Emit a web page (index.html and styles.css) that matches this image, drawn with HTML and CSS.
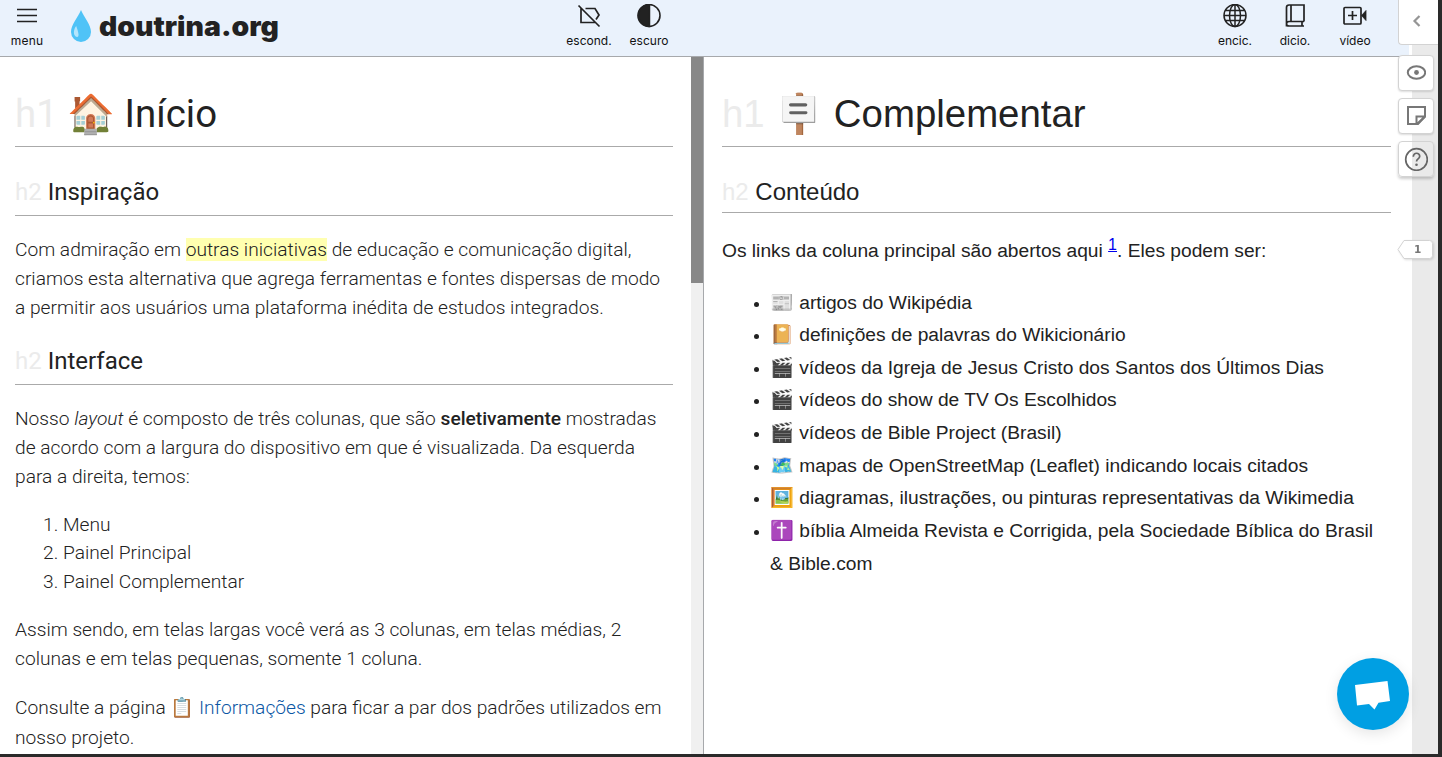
FILE: index.html
```html
<!DOCTYPE html>
<html lang="pt-BR">
<head>
<meta charset="utf-8">
<title>doutrina.org</title>
<link rel="stylesheet" href="styles.css">
</head>
<body>
<div class="window">
  <div class="site">
    <header class="topbar">
      <div class="tool tool-menu">
        <svg class="icon" viewBox="0 0 24 24"><path d="M2 5.500h20M2 11.500h20M2 17.500h20" stroke-width="1.6"/></svg>
        <span>menu</span>
      </div>
      <div class="brand">
        <svg class="drop" viewBox="0 0 20 32"><path d="M10 0C7 7 0 15 0 22a10 10 0 0 0 20 0C20 15 13 7 10 0Z" fill="#4fc3f7"/><path d="M5.200 16C2 20 2 26 6 27c3 0 1-6-.8-11Z" fill="#b3e5fc"/></svg>
        <svg class="wordmark" viewBox="0 0 182 40"><text x="0" y="26" textLength="180" lengthAdjust="spacingAndGlyphs">doutrina.org</text></svg>
      </div>
      <div class="tool tool-hide">
        <svg class="icon" viewBox="0 0 24 24"><path d="M1.500 1.500 22.500 22.500M8.500 4.500H18l4 6.500-3 4.500M4 4.500v14h14.500" stroke-width="1.7"/></svg>
        <span>escond.</span>
      </div>
      <div class="tool tool-dark">
        <svg class="icon" viewBox="0 0 24 24"><circle cx="12" cy="11.500" r="11" stroke-width="1.600"/><path d="M12.500.5a11 11 0 0 0 0 22Z" fill="#222"/></svg>
        <span>escuro</span>
      </div>
      <div class="tool tool-enc">
        <svg class="icon" viewBox="0 0 24 24"><circle cx="12" cy="11.500" r="11"/><ellipse cx="12" cy="11.500" rx="5.500" ry="11"/><path d="M12 .5v22M1 11.500h22M2.500 6.500h19M2.500 16.500h19"/></svg>
        <span>encic.</span>
      </div>
      <div class="tool tool-dic">
        <svg class="icon" viewBox="0 0 24 24"><path d="M21 17.500V1H6Q3.500 1 3.500 3.500v19M21 17.500H6q-2.500 0-2.500 2.500Q3.500 22 6 22H21M8 1v16.500M19 17.500V22" stroke-width="1.700"/></svg>
        <span>dicio.</span>
      </div>
      <div class="tool">
        <svg class="icon" viewBox="0 0 24 24"><rect x="1" y="3.500" width="17" height="16.500" rx="1" stroke-width="1.700"/><path d="M9.500 7v9M5 11.500h9" stroke-width="1.700"/><path d="M18.500 11.500l4.500-5v10Z" fill="#222" stroke-width=".8"/></svg>
        <span>vídeo</span>
      </div>
    </header>

    <div class="columns">
      <main class="main">
        <h1><i class="tag">h1</i> <span class="emoji">🏠</span> Início</h1>
        <h2><i class="tag">h2</i> Inspiração</h2>
        <p>Com admiração em <mark>outras iniciativas</mark> de educação e comunicação digital,<br>criamos esta alternativa que agrega ferramentas e fontes dispersas de modo<br>a permitir aos usuários uma plataforma inédita de estudos integrados.</p>
        <h2><i class="tag">h2</i> Interface</h2>
        <p>Nosso <em>layout</em> é composto de três colunas, que são <b>seletivamente</b> mostradas<br>de acordo com a largura do dispositivo em que é visualizada. Da esquerda<br>para a direita, temos:</p>
        <ol>
          <li>Menu</li>
          <li>Painel Principal</li>
          <li>Painel Complementar</li>
        </ol>
        <p>Assim sendo, em telas largas você verá as 3 colunas, em telas médias, 2<br>colunas e em telas pequenas, somente 1 coluna.</p>
        <p class="see-also">Consulte a página <span class="emoji">📋</span> <a class="info">Informações</a> para ficar a par dos padrões utilizados em<br>nosso projeto.</p>
      </main>
      <div class="scrollbar"><div class="thumb"></div></div>
      <aside class="extra">
        <h1><i class="tag">h1</i> <span class="emoji">🪧</span> Complementar</h1>
        <h2><i class="tag">h2</i> Conteúdo</h2>
        <p>Os links da coluna principal são abertos aqui <sup>1</sup>. Eles podem ser:</p>
        <ul>
          <li><span class="emoji">📰</span> artigos do Wikipédia</li>
          <li><span class="emoji">📔</span> definições de palavras do Wikicionário</li>
          <li><span class="emoji">🎬</span> vídeos da Igreja de Jesus Cristo dos Santos dos Últimos Dias</li>
          <li><span class="emoji">🎬</span> vídeos do show de TV Os Escolhidos</li>
          <li><span class="emoji">🎬</span> vídeos de Bible Project (Brasil)</li>
          <li><span class="emoji">🗺️</span> mapas de OpenStreetMap (Leaflet) indicando locais citados</li>
          <li><span class="emoji">🖼️</span> diagramas, ilustrações, ou pinturas representativas da Wikimedia</li>
          <li><span class="emoji">✝️</span> bíblia Almeida Revista e Corrigida, pela Sociedade Bíblica do Brasil<br>&amp; Bible.com</li>
        </ul>
      </aside>
    </div>
  </div>
  <div class="gutter"></div>

  <div class="annotator">
    <div class="collapse"><svg viewBox="0 0 16 16"><path d="M10.500 3 5.500 8l5 5" stroke-width="2.200" stroke="#959595"/></svg></div>
    <div class="btn"><svg viewBox="0 0 20 20"><ellipse cx="10.500" cy="9.500" rx="8.700" ry="6.200"/><circle cx="10.500" cy="9.500" r="2.400" fill="#777" stroke="none"/></svg></div>
    <div class="btn"><svg viewBox="0 0 20 20"><path d="M2 1h17v9.500L12 18H2Z"/><path d="M19 10.500h-8.500V18M11 18l8-7.500"/></svg></div>
    <div class="btn help"><svg viewBox="0 0 24 24"><circle cx="12.500" cy="12.500" r="10.800" stroke-width="1.700"/><path d="M9.300 9.800c0-5 6.600-4.300 6.400-.4-.1 2.500-3.200 2.500-3.200 5" stroke-width="1.700"/><circle cx="12.500" cy="17.800" r="1.300" fill="#666" stroke="none"/></svg></div>
  </div>
  <div class="bucket"><svg viewBox="0 0 37 21"><path d="M7 1.500h25.500q3 0 3 3v12q0 3-3 3H7L1 10.500Z" fill="#fff" stroke="#d3d3d3" stroke-width="1"/></svg><span>1</span></div>
  <div class="chat"><svg viewBox="0 0 72 72"><path d="M18 27 50.500 23l2.500 20-11.500 1.700-4 6.800-5.500-5.600L20 47.500Z" fill="#fff"/></svg></div>
</div>
</body>
</html>
```
FILE: styles.css
```css
* { box-sizing: border-box; }
body { margin: 0; background: #2a2a2a; color: #222; }
svg { display: block; fill: none; }
.window { position: relative; display: flex; width: 1438px; height: 754px; background: #fff; overflow: hidden; }
.site { width: 1412px; height: 754px; display: flex; flex-direction: column; }
.gutter { width: 26px; background: #eaeaea; }

.topbar { width: 1409px; height: 57px; display: flex; background: #eaf2fc; border-bottom: 1px solid #a7a9ac; }
.tool { width: 60px; padding-top: 4px; display: flex; flex-direction: column; align-items: center; font: 12px/16px Inter, sans-serif; color: #111; }
.tool span { margin-top: 5px; }
.icon { width: 24px; height: 24px; stroke: #222; stroke-width: 1.5; }
.tool-menu { width: 54px; }
.tool-menu span { letter-spacing: .15px; }
.tool-enc { margin-left: 526px; }
.brand { width: 505px; padding: 10px 0 0 17px; display: flex; gap: 8px; }
.drop { width: 20px; height: 32px; }
.wordmark { width: 182px; height: 40px; overflow: visible; }
.wordmark text { font: 900 27px Inter, sans-serif; fill: #222; }

.columns { flex: 1; display: flex; min-height: 0; }
.main { width: 691px; padding: 0 18px 0 15px; font: 300 19.18px/28.8px Roboto, sans-serif; white-space: nowrap; overflow: hidden; }
.scrollbar { width: 13px; background: #f0f0f0; border-right: 1px solid #a7a9ac; }
.thumb { width: 12px; height: 226px; background: #888; }
.extra { flex: 1; padding: 0 21px 0 18px; font: 19.2px/32.64px "Liberation Sans", sans-serif; white-space: nowrap; overflow: hidden; }

h1 { margin: 0; height: 90px; padding-top: 27px; border-bottom: 1px solid #aaa; font-weight: 400; font-size: 38.4px; line-height: 60px; }
h2 { margin: 28px 0 0; height: 41px; border-bottom: 1px solid #aaa; font-weight: 400; font-size: 24px; line-height: 34px; }
.main p + h2 { margin-top: 21.600px; }
.main h2 + p { margin-top: 20px; }
.extra h2 { height: 38px; }
.tag { font-style: normal; color: #ebebeb; }
p { margin: 19.200px 0; }
.main .see-also { margin-top: 18.700px; line-height: 29.600px; }
.extra p { margin: 22px 0 18.900px; }
mark { background: #ffffb0; color: inherit; }
b { font-weight: 500; }
.info { color: #0b57a4; }
ol, ul { margin: 19.200px 0; padding-left: 48px; }
.extra ul { margin-top: 18.900px; }
ul li::marker { font-size: 15px; }
sup { font-size: 16px; line-height: 0; color: #00e; text-decoration: underline; }
.emoji { font-family: "Noto Color Emoji", sans-serif; line-height: 1; }

.annotator { position: absolute; right: 0; top: 0; width: 40px; display: flex; flex-direction: column; gap: 7px; }
.annotator svg { width: 20px; height: 20px; stroke: #777; stroke-width: 2; }
.collapse { height: 45px; margin-bottom: 3px; padding-right: 3px; display: flex; align-items: center; justify-content: center; background: #fff; border: 1px solid #d3d3d3; border-width: 0 0 1px 1px; border-radius: 0 0 0 4px; }
.annotator .collapse svg { width: 16px; height: 16px; margin-top: -3px; }
.btn { width: 36px; height: 36px; display: flex; align-items: center; justify-content: center; background: #fff; border: 1px solid #d3d3d3; border-radius: 4px; box-shadow: 0 1px 2px #0002; }
.annotator .help { background: linear-gradient(90deg, #fff 13px, #eaeaea 13px); box-shadow: 0 2px 3px #0003; }
.annotator .help svg { width: 24px; height: 24px; stroke: #666; flex: none; }
.bucket { position: absolute; left: 1397px; top: 239px; width: 37px; height: 21px; filter: drop-shadow(1px 1px 1px #0002); }
.bucket span { position: absolute; left: 17px; top: 2px; font: bold 10.500px/16px "DejaVu Sans", sans-serif; color: #777; }
.chat { position: absolute; left: 1337px; top: 658px; width: 72px; height: 72px; border-radius: 50%; background: #009fe3; box-shadow: 0 4px 14px #0000001a; }
```
